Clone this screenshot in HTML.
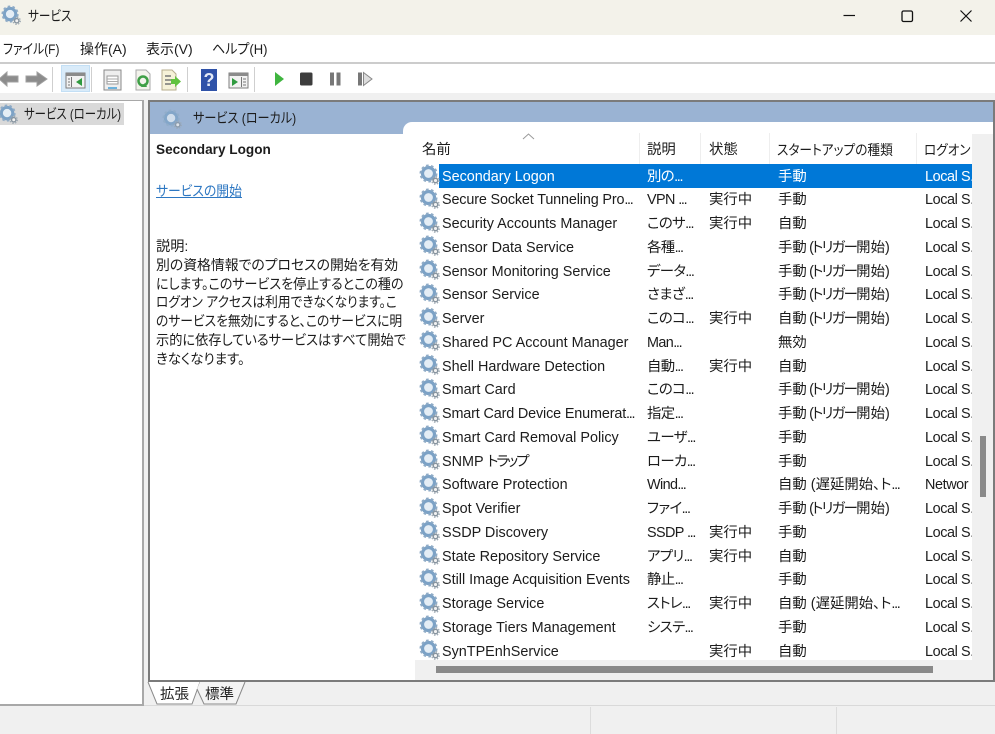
<!DOCTYPE html>
<html lang="ja"><head><meta charset="utf-8"><title>サービス</title>
<style>
html,body{margin:0;padding:0}
body{position:relative;width:995px;height:734px;overflow:hidden;background:#f0f0f0;font-family:"Liberation Sans","Noto Sans CJK JP",sans-serif;font-size:14.4px;color:#1c1c1c;font-feature-settings:"palt"}
div,span,svg{position:absolute;white-space:nowrap;transform-origin:0 50%}
i{font-style:normal;letter-spacing:-1.3px}
b{font-weight:normal;letter-spacing:-1.7px}
.m{top:39px;line-height:20px;font-size:14px}
.row{left:415px;width:557px;height:24px;line-height:24px;overflow:hidden}
.row span{top:1px}
.row svg{left:3.500px;top:.5px}
.a{left:27px}.b{left:232px;letter-spacing:-.6px}.c{left:294px}.d{left:363px}.e{left:510px;letter-spacing:-.4px}
.h{top:139px;line-height:22px}
.sep{top:133px;width:1px;height:31px;background:#eee}
.dl{left:156px;line-height:19px;font-size:14.2px}
</style></head><body>
<svg width="0" height="0" style="left:0;top:0"><defs>
<symbol id="g" viewBox="0 0 22 22">
<circle cx="9.500" cy="9.500" r="6" fill="#e4edf5" stroke="#7ca2c6" stroke-width="3.200"/>
<circle cx="9.500" cy="9.500" r="8" fill="none" stroke="#8fabc6" stroke-width="2" stroke-dasharray="2.600 2.400"/>
<circle cx="16.500" cy="16.500" r="2.300" fill="#f2f2f2" stroke="#87949f" stroke-width="1.500"/>
<circle cx="16.500" cy="16.500" r="3.800" fill="none" stroke="#9aa6b0" stroke-width="1.200" stroke-dasharray="1.500 1.500"/>
</symbol></defs></svg>

<!-- title bar -->
<div style="left:0;top:0;width:995px;height:35px;background:#f3f2ea"></div>
<svg style="left:1px;top:5px" width="21" height="21"><use href="#g"/></svg>
<span style="left:28px;top:6px;line-height:20px;font-size:14px;transform:scaleX(.83)">サービス</span>
<svg style="left:840px;top:8px" width="150" height="18" fill="none" stroke="#111">
<path d="M3.500 7.500H15" stroke-width="1.200"/>
<rect x="62" y="3" width="10.500" height="10.500" rx="1.500" stroke-width="1.300"/>
<path d="M120.500 2.500L131.500 13.500M131.500 2.500L120.500 13.500" stroke-width="1.200"/>
</svg>

<!-- menu -->
<div style="left:0;top:35px;width:995px;height:28px;background:#fff"></div>
<div style="left:0;top:62px;width:995px;height:2px;background:#ccc"></div>
<span class="m" style="left:3px;transform:scaleX(.85)">ファイル(F)</span>
<span class="m" style="left:80px">操作(A)</span>
<span class="m" style="left:146px">表示(V)</span>
<span class="m" style="left:212px;transform:scaleX(.93)">ヘルプ(H)</span>

<!-- toolbar -->
<div style="left:0;top:64px;width:995px;height:29px;background:#fff"></div>
<div style="left:61px;top:65px;width:29px;height:27px;background:#d9ebf9;border:1px solid #c3dff5;box-sizing:border-box"></div>
<svg style="left:0;top:64px" width="380" height="30">
<path d="M-1 15L7 8V12H18V18H7V22Z" fill="#8c8c8c" stroke="#a0a0a0"/>
<path d="M47 15L37 8V12H26V18H37V22Z" fill="#8c8c8c" stroke="#a0a0a0"/>
<path d="M52.500 3V28M91.500 3V28M187.500 3V28M254.500 3V28" stroke="#cfcfcf"/>
<rect x="66" y="9" width="19" height="15" fill="#f2f2f2" stroke="#7e7e7e"/><rect x="66" y="9" width="19" height="3" fill="#8b8b8b"/>
<path d="M71.500 13V23M70 15H68M70 18H68M70 21H68" stroke="#777"/><path d="M82 14V22L76 18Z" fill="#2f9a3f"/>
<rect x="104" y="6" width="17" height="20" fill="#eee" stroke="#888"/><rect x="107" y="12" width="11" height="8" fill="#fff" stroke="#999"/><path d="M107 15H118M107 17.500H118" stroke="#aaa"/><path d="M108 24H117" stroke="#6cb2dc" stroke-width="2"/>
<path d="M136 6H146L150 10V26H136Z" fill="#f3f3ec" stroke="#aaa"/><circle cx="143" cy="17" r="4.500" fill="none" stroke="#3f9f46" stroke-width="2.500"/><path d="M141 23L147 23 145 19Z" fill="#3f9f46"/>
<path d="M162 6H172L176 10V26H162Z" fill="#f6f2d8" stroke="#b7ae8e"/><path d="M165 12H171M165 16H171M165 20H171" stroke="#777" stroke-width="1.500"/><path d="M171 15H175V12L181 17.500 175 23V20H171Z" fill="#62c23e"/>
<rect x="201" y="5" width="16" height="22" fill="#2f52a8"/><text x="209" y="22" font-family="Liberation Sans" font-size="18" font-weight="bold" fill="#e4eaf6" text-anchor="middle">?</text>
<rect x="229" y="9" width="19" height="15" fill="#f2f2f2" stroke="#7e7e7e"/><rect x="229" y="9" width="19" height="3" fill="#8b8b8b"/>
<path d="M232 14V22L238 18Z" fill="#2f9a3f"/><path d="M241.500 13V23M243 15H246M243 18H246M243 21H246" stroke="#777"/>
<path d="M275 8L284 15 275 22Z" fill="#3fb53f"/>
<rect x="300" y="8.500" width="12.500" height="13" rx="1.500" fill="#3d3d3d"/>
<rect x="330" y="8.500" width="4" height="13" fill="#777"/><rect x="336.500" y="8.500" width="4" height="13" fill="#777"/>
<rect x="358" y="8.500" width="4" height="13" fill="#777"/><path d="M363.500 8.500L372 15 363.500 21.500Z" fill="#ddd" stroke="#888"/>
</svg>

<!-- left tree -->
<div style="left:0;top:100px;width:144px;height:606px;background:#fff;border:solid #a8a8a8;border-width:1px 2px 2px 0;box-sizing:border-box"></div>
<div style="left:0;top:103px;width:124px;height:22px;background:#d9d9d9"></div>
<svg style="left:-2px;top:104px" width="21" height="21"><use href="#g"/></svg>
<span style="left:24px;top:104px;line-height:20px;font-size:14px;transform:scaleX(.815)">サービス (ローカル)</span>

<!-- right pane -->
<div style="left:148px;top:100px;width:847px;height:582px;background:#fff;border:solid #7b7b7b;border-width:2px;box-sizing:border-box"></div>
<div style="left:150px;top:102px;width:843px;height:32px;background:#9ab3d3"></div>
<svg style="left:162px;top:109px" width="21" height="21" opacity=".75"><use href="#g"/></svg>
<span style="left:193px;top:108px;line-height:20px;font-size:14px;transform:scaleX(.866)">サービス (ローカル)</span>
<div style="left:403px;top:122px;width:590px;height:30px;background:#fff;border-radius:9px 0 0 0"></div>

<!-- description -->
<span style="left:156px;top:140px;line-height:20px;font-weight:bold;font-size:13.600px">Secondary Logon</span>
<span style="left:156px;top:181px;line-height:20px;font-size:14px;color:#2d77c2;text-decoration:underline;transform:scaleX(.915)">サービスの開始</span>
<span class="dl" style="top:238px">説明:</span>
<span class="dl" style="top:257px;transform:scaleX(.976)">別の資格情報でのプロセスの開始を有効</span>
<span class="dl" style="top:276px;transform:scaleX(.918)">にします。このサービスを停止するとこの種の</span>
<span class="dl" style="top:294px;transform:scaleX(.895)">ログオン アクセスは利用できなくなります。こ</span>
<span class="dl" style="top:313px;transform:scaleX(.9)">のサービスを無効にすると、このサービスに明</span>
<span class="dl" style="top:332px;transform:scaleX(.93)">示的に依存しているサービスはすべて開始で</span>
<span class="dl" style="top:351px;transform:scaleX(.95)">きなくなります。</span>

<!-- headers -->
<svg style="left:522px;top:133px" width="13" height="7"><path d="M1 6L6.500 1 12 6" fill="none" stroke="#9a9a9a"/></svg>
<span class="h" style="left:422px">名前</span>
<span class="h" style="left:647px">説明</span>
<span class="h" style="left:709px">状態</span>
<span class="h" style="left:777px;font-size:14px;transform:scaleX(.906)">スタートアップの種類</span>
<span class="h" style="left:924px;font-size:14px;transform:scaleX(.9)">ログオン</span>
<div class="sep" style="left:639px"></div><div class="sep" style="left:700px"></div><div class="sep" style="left:769px"></div><div class="sep" style="left:916px"></div>

<!-- selection -->
<div style="left:439px;top:164px;width:533px;height:24px;background:#0078d7"></div>

<!-- rows -->
<div class="row" style="top:163.500px;color:#fff"><svg width="22" height="22"><use href="#g"/></svg><span class="a">Secondary Logon</span><span class="b">別の<i>...</i></span><span class="d">手動</span><span class="e">Local S.</span></div>
<div class="row" style="top:187.300px"><svg width="22" height="22"><use href="#g"/></svg><span class="a" style="letter-spacing:-.15px">Secure Socket Tunneling Pro<i>...</i></span><span class="b">VPN <i>...</i></span><span class="c">実行中</span><span class="d">手動</span><span class="e">Local S.</span></div>
<div class="row" style="top:211px"><svg width="22" height="22"><use href="#g"/></svg><span class="a">Security Accounts Manager</span><span class="b">このサ<i>...</i></span><span class="c">実行中</span><span class="d">自動</span><span class="e">Local S.</span></div>
<div class="row" style="top:234.800px"><svg width="22" height="22"><use href="#g"/></svg><span class="a">Sensor Data Service</span><span class="b">各種<i>...</i></span><span class="d">手動<b> (トリガー</b>開始)</span><span class="e">Local S.</span></div>
<div class="row" style="top:258.500px"><svg width="22" height="22"><use href="#g"/></svg><span class="a">Sensor Monitoring Service</span><span class="b">データ<i>...</i></span><span class="d">手動<b> (トリガー</b>開始)</span><span class="e">Local S.</span></div>
<div class="row" style="top:282.300px"><svg width="22" height="22"><use href="#g"/></svg><span class="a">Sensor Service</span><span class="b">さまざ<i>...</i></span><span class="d">手動<b> (トリガー</b>開始)</span><span class="e">Local S.</span></div>
<div class="row" style="top:306px"><svg width="22" height="22"><use href="#g"/></svg><span class="a">Server</span><span class="b">このコ<i>...</i></span><span class="c">実行中</span><span class="d">自動<b> (トリガー</b>開始)</span><span class="e">Local S.</span></div>
<div class="row" style="top:329.800px"><svg width="22" height="22"><use href="#g"/></svg><span class="a">Shared PC Account Manager</span><span class="b">Man<i>...</i></span><span class="d">無効</span><span class="e">Local S.</span></div>
<div class="row" style="top:353.500px"><svg width="22" height="22"><use href="#g"/></svg><span class="a">Shell Hardware Detection</span><span class="b">自動<i>...</i></span><span class="c">実行中</span><span class="d">自動</span><span class="e">Local S.</span></div>
<div class="row" style="top:377.300px"><svg width="22" height="22"><use href="#g"/></svg><span class="a">Smart Card</span><span class="b">このコ<i>...</i></span><span class="d">手動<b> (トリガー</b>開始)</span><span class="e">Local S.</span></div>
<div class="row" style="top:401px"><svg width="22" height="22"><use href="#g"/></svg><span class="a" style="letter-spacing:-.15px">Smart Card Device Enumerat<i>...</i></span><span class="b">指定<i>...</i></span><span class="d">手動<b> (トリガー</b>開始)</span><span class="e">Local S.</span></div>
<div class="row" style="top:424.800px"><svg width="22" height="22"><use href="#g"/></svg><span class="a">Smart Card Removal Policy</span><span class="b">ユーザ<i>...</i></span><span class="d">手動</span><span class="e">Local S.</span></div>
<div class="row" style="top:448.500px"><svg width="22" height="22"><use href="#g"/></svg><span class="a">SNMP <b style="letter-spacing:-2px">トラップ</b></span><span class="b">ローカ<i>...</i></span><span class="d">手動</span><span class="e">Local S.</span></div>
<div class="row" style="top:472.300px"><svg width="22" height="22"><use href="#g"/></svg><span class="a">Software Protection</span><span class="b">Wind<i>...</i></span><span class="d">自動 (遅延開始、ト<i>...</i></span><span class="e">Networ</span></div>
<div class="row" style="top:496px"><svg width="22" height="22"><use href="#g"/></svg><span class="a">Spot Verifier</span><span class="b">ファイ<i>...</i></span><span class="d">手動<b> (トリガー</b>開始)</span><span class="e">Local S.</span></div>
<div class="row" style="top:519.800px"><svg width="22" height="22"><use href="#g"/></svg><span class="a">SSDP Discovery</span><span class="b">SSDP <i>...</i></span><span class="c">実行中</span><span class="d">手動</span><span class="e">Local S.</span></div>
<div class="row" style="top:543.500px"><svg width="22" height="22"><use href="#g"/></svg><span class="a">State Repository Service</span><span class="b">アプリ<i>...</i></span><span class="c">実行中</span><span class="d">自動</span><span class="e">Local S.</span></div>
<div class="row" style="top:567.300px"><svg width="22" height="22"><use href="#g"/></svg><span class="a">Still Image Acquisition Events</span><span class="b">静止<i>...</i></span><span class="d">手動</span><span class="e">Local S.</span></div>
<div class="row" style="top:591px"><svg width="22" height="22"><use href="#g"/></svg><span class="a">Storage Service</span><span class="b">ストレ<i>...</i></span><span class="c">実行中</span><span class="d">自動 (遅延開始、ト<i>...</i></span><span class="e">Local S.</span></div>
<div class="row" style="top:614.800px"><svg width="22" height="22"><use href="#g"/></svg><span class="a">Storage Tiers Management</span><span class="b">システ<i>...</i></span><span class="d">手動</span><span class="e">Local S.</span></div>
<div class="row" style="top:638.500px"><svg width="22" height="22"><use href="#g"/></svg><span class="a">SynTPEnhService</span><span class="c">実行中</span><span class="d">自動</span><span class="e">Local S.</span></div>

<!-- scrollbars -->
<div style="left:972px;top:134px;width:21px;height:546px;background:#f0f0f0"></div>
<div style="left:980px;top:436px;width:6px;height:61px;background:#8a8a8a"></div>
<div style="left:415px;top:660px;width:578px;height:20px;background:#f0f0f0"></div>
<div style="left:436px;top:666px;width:497px;height:7px;background:#8a8a8a"></div>

<!-- tabs -->
<div style="left:144px;top:682px;width:851px;height:24px;background:#f0f0f0"></div>
<div style="left:144px;top:705px;width:851px;height:1px;background:#d9d9d9"></div>
<svg style="left:146px;top:681px" width="110" height="26">
<path d="M2 1L11 23H46L54 1Z" fill="#fff"/>
<path d="M2 1L11 23H46L54 1" fill="none" stroke="#8a8a8a"/>
<path d="M51 8L58 23H90L99 1H54Z" fill="#f4f4f4"/>
<path d="M51 8L58 23H90L99 1" fill="none" stroke="#8a8a8a"/>
<text x="14" y="18" font-family="Liberation Sans,Noto Sans CJK JP,sans-serif" font-size="14.500" fill="#222">拡張</text>
<text x="59" y="18" font-family="Liberation Sans,Noto Sans CJK JP,sans-serif" font-size="14.500" fill="#222">標準</text>
</svg>

<!-- status bar -->
<div style="left:0;top:706px;width:995px;height:28px;background:#f0f0f0"></div>
<div style="left:590px;top:707px;width:1px;height:27px;background:#dcdcdc"></div>
<div style="left:836px;top:707px;width:1px;height:27px;background:#dcdcdc"></div>
</body></html>
